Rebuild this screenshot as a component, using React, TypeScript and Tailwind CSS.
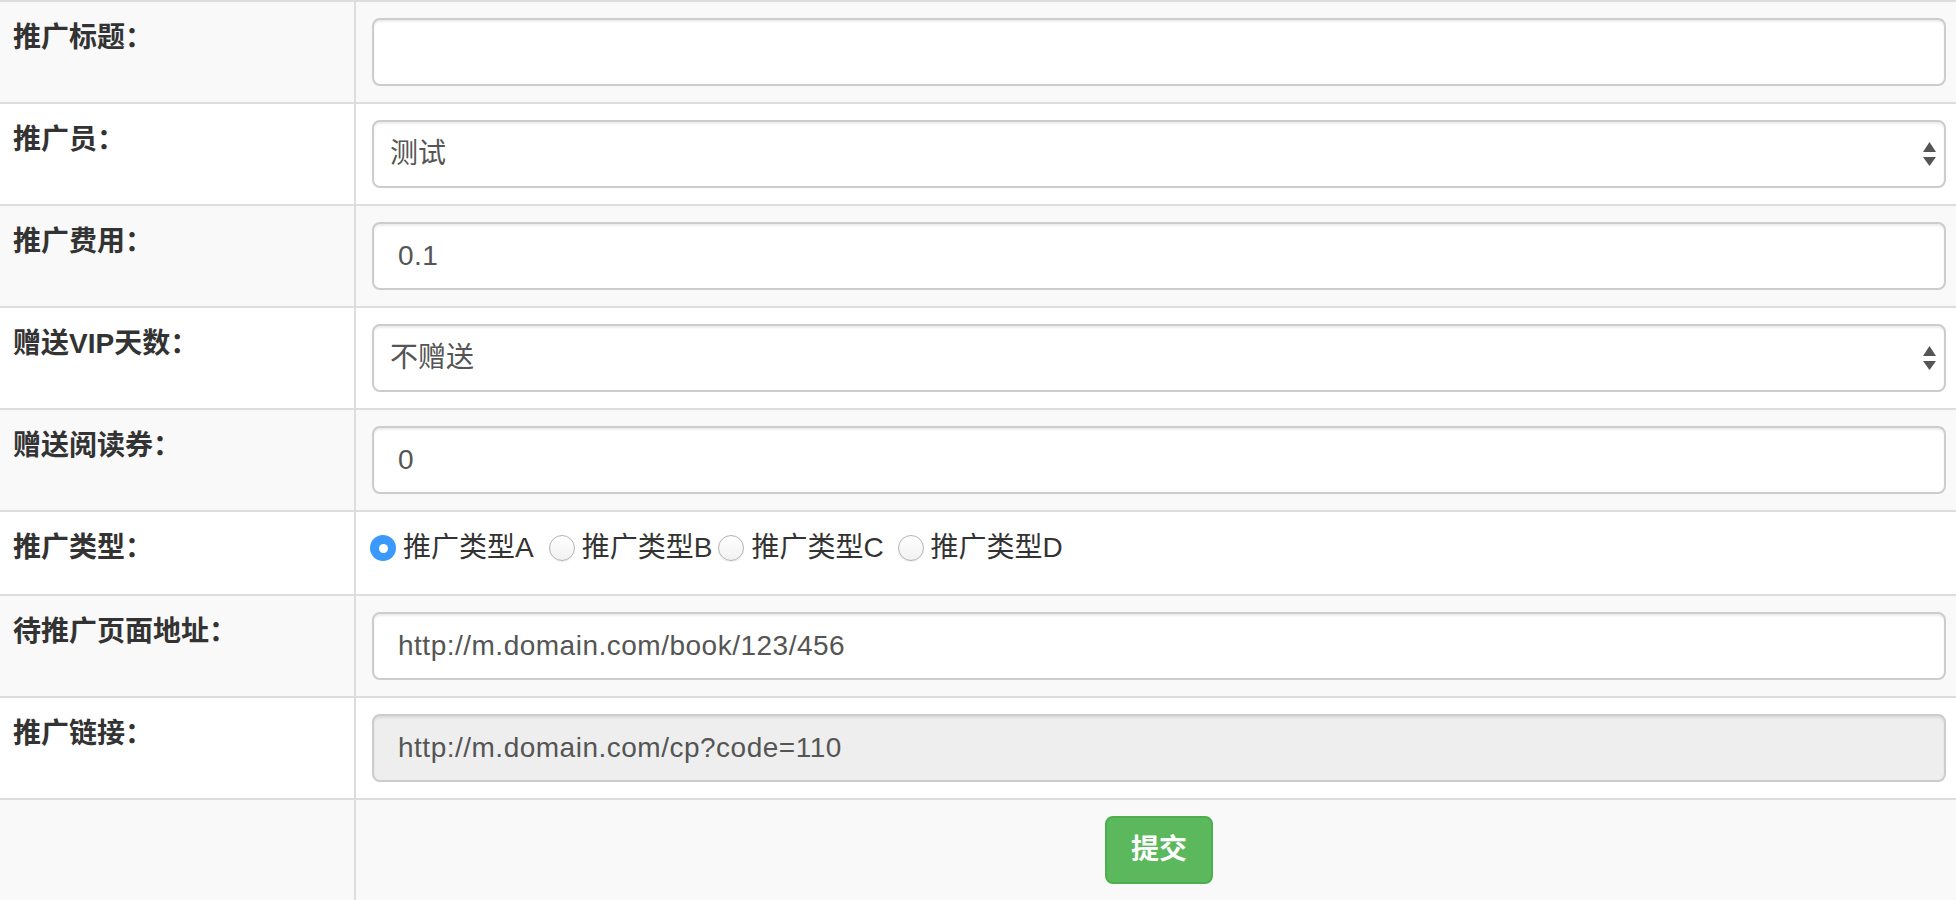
import type { ReactNode } from "react";

const inputCls =
  "block h-[68px] w-full rounded-[8px] border-2 border-[#ccc] px-[24px] text-[28px] leading-[40px] text-[#555] shadow-[inset_0_2px_2px_rgba(0,0,0,0.075)] outline-none";

function Row({
  label,
  striped,
  children,
}: {
  label?: string;
  striped?: boolean;
  children: ReactNode;
}) {
  return (
    <tr className={striped ? "bg-[#f9f9f9]" : "bg-white"}>
      <td className="w-[356px] border-t-2 border-r-2 border-[#ddd] py-4 pl-[13px] align-top text-[28px] font-bold leading-[40px] text-[#333]">
        {label}
      </td>
      <td className="border-t-2 border-[#ddd] px-4 py-4 align-top">{children}</td>
    </tr>
  );
}

function SelectBox({ value }: { value: string }) {
  return (
    <div className="relative">
      <select
        defaultValue={value}
        className={inputCls + " appearance-none bg-white pl-[16px]"}
      >
        <option value={value}>{value}</option>
      </select>
      <svg
        className="pointer-events-none absolute top-[22px] right-[10px]"
        width="13"
        height="24"
        viewBox="0 0 13 24"
      >
        <path d="M6.5 0 L13 10 L0 10 Z" fill="#555" />
        <path d="M0 15 L13 15 L6.5 24 Z" fill="#555" />
      </svg>
    </div>
  );
}

function Radio({ checked }: { checked?: boolean }) {
  if (checked) {
    return (
      <span className="flex h-[26px] w-[26px] shrink-0 items-center justify-center rounded-full bg-[#3b99fc]">
        <span className="h-[9px] w-[9px] rounded-full bg-white" />
      </span>
    );
  }
  return (
    <span className="block h-[26px] w-[26px] shrink-0 rounded-full border border-[#b4b4b4] bg-gradient-to-b from-white to-[#f1f1f1] shadow-[0_1px_1px_rgba(0,0,0,0.08)]" />
  );
}

const types = [
  { text: "推广类型A", ml: "ml-[-2px]", checked: true },
  { text: "推广类型B", ml: "ml-[15px]" },
  { text: "推广类型C", ml: "ml-[6px]" },
  { text: "推广类型D", ml: "ml-[14px]" },
];

export default function App() {
  return (
    <div className="w-full overflow-hidden bg-white font-['Liberation_Sans','Noto_Sans_CJK_SC',sans-serif] text-[#333]">
      <table className="w-[1962px] border-separate border-spacing-0">
        <tbody>
          <Row label="推广标题：" striped>
            <input readOnly className={inputCls + " bg-white"} defaultValue="" />
          </Row>
          <Row label="推广员：">
            <SelectBox value="测试" />
          </Row>
          <Row label="推广费用：" striped>
            <input
              readOnly
              className={inputCls + " bg-white tracking-[0.5px]"}
              defaultValue="0.1"
            />
          </Row>
          <Row label="赠送VIP天数：">
            <SelectBox value="不赠送" />
          </Row>
          <Row label="赠送阅读券：" striped>
            <input
              readOnly
              className={inputCls + " bg-white tracking-[0.5px]"}
              defaultValue="0"
            />
          </Row>
          <Row label="推广类型：">
            <div className="h-[50px]">
              <div className="flex h-[40px] items-center text-[28px] text-[#333]">
                {types.map((t) => (
                  <div key={t.text} className={"flex items-center " + t.ml}>
                    <Radio checked={t.checked} />
                    <span className="ml-[7px] whitespace-nowrap">{t.text}</span>
                  </div>
                ))}
              </div>
            </div>
          </Row>
          <Row label="待推广页面地址：" striped>
            <input
              readOnly
              className={inputCls + " bg-white tracking-[0.5px]"}
              defaultValue="http://m.domain.com/book/123/456"
            />
          </Row>
          <Row label="推广链接：">
            <input
              readOnly
              disabled
              className={inputCls + " bg-[#eee] tracking-[0.5px]"}
              defaultValue="http://m.domain.com/cp?code=110"
            />
          </Row>
          <Row striped>
            <div className="text-center">
              <button className="h-[68px] rounded-[8px] border-2 border-[#4cae4c] bg-[#5cb85c] px-[24px] text-[28px] font-bold leading-[40px] text-white">
                提交
              </button>
            </div>
          </Row>
        </tbody>
      </table>
    </div>
  );
}
